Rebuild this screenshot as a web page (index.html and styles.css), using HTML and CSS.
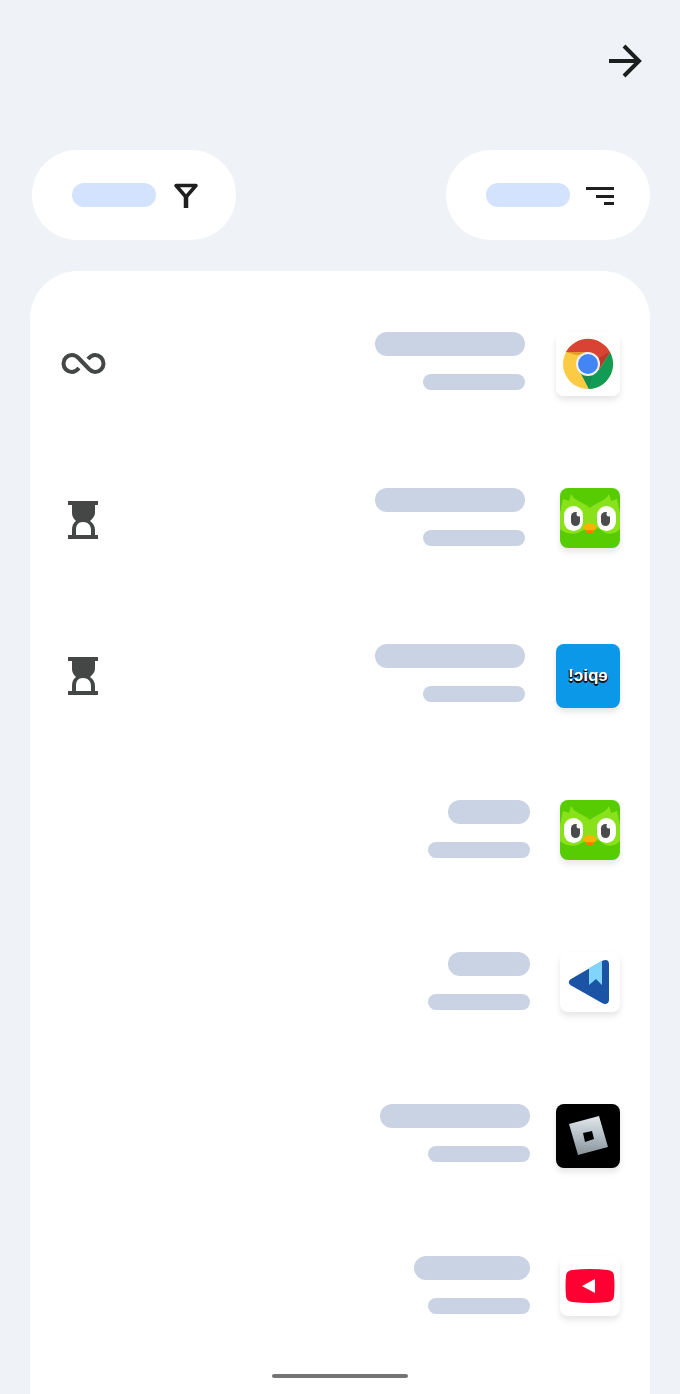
FILE: index.html
```
<!DOCTYPE html>
<html lang="en">
<head>
	<meta charset="UTF-8">
	<meta name="viewport" content="width=device-width, initial-scale=1">
	<title>Apps</title>
	<link rel="stylesheet" href="styles.css">
</head>
<body>
	<!-- shared shapes -->
	<svg class="defs" aria-hidden="true">
		<symbol id="hourglass" viewBox="0 0 30 38">
			<path d="M0 0h30v4h-3v8c0 3-2 5-5 8c3 2 5 5 5 9v5h3v4H0v-4h4v-5c0-4 1-7 4-9c-3-3-4-5-4-8V4H0zM8 34h15v-5c0-5-3-8-8-8s-7 3-7 8z" fill="#444746" fill-rule="evenodd"/>
		</symbol>
		<symbol id="owl" viewBox="0 0 60 60">
			<path d="M0 25L3 11l6 2l2-7c4 8 13 8 19 14c6-6 15-6 19-14l2 7l6-2l3 14v16c-5 6-14 6-19 1c-4-4-14-4-18 0c-6 5-17 5-23-1z" fill="#89e219"/>
			<rect x="4" y="18" width="19" height="25" rx="9.500" fill="#fff"/>
			<rect x="37" y="18" width="19" height="25" rx="9.500" fill="#fff"/>
			<rect x="11" y="24" width="9" height="14" rx="4.500" fill="#4b4b4b"/>
			<rect x="41" y="24" width="9" height="14" rx="4.500" fill="#4b4b4b"/>
			<circle cx="19" cy="26" r="2.500" fill="#fff"/>
			<circle cx="49" cy="26" r="2.500" fill="#fff"/>
			<path d="M26 40h8v3c-1 4-7 4-8 0z" fill="#f47b00"/>
			<path d="M30 35c4 0 8 4 6 6c-2 2-4 1-6 1s-4 1-6-1c-2-2 2-6 6-6z" fill="#ffb100"/>
		</symbol>
	</svg>

	<main class="screen">
		<header class="topbar">
			<button class="back" type="button" aria-label="Back">
				<svg width="34" height="34" viewBox="0 0 34 34" fill="none" stroke="#1b1f1e" stroke-width="4">
					<path d="M1 17h29M16 2l15 15l-15 15"/>
				</svg>
			</button>
		</header>

		<div class="tools">
			<button class="tool" type="button" aria-label="Filter">
				<span class="tool-label"></span>
				<svg width="28" height="28" viewBox="0 0 28 28" fill="none" stroke="#1f1f1f">
					<path d="M4 4.500h20L14 16z" stroke-width="3.500" stroke-linejoin="round"/>
					<path d="M14 15v12" stroke-width="4.500"/>
				</svg>
			</button>
			<button class="tool" type="button" aria-label="Sort">
				<span class="tool-label"></span>
				<svg width="28" height="28" viewBox="0 0 28 28" fill="#1f1f1f">
					<path d="M0 6h28v3H0zM10 14h18v3H10zM18 21h10v3H18z"/>
				</svg>
			</button>
		</div>

		<ul class="apps">
			<li class="app limited">
				<svg class="status" width="46" height="24" viewBox="0 0 46 24" fill="none" stroke="#444746" stroke-width="4">
					<path d="M19 16C16.500 19 14.500 20 12 20A8.500 8.500 0 0 1 12 3C14.500 3 16.500 4 18.500 6L29 17C31 19 32.500 20 35 20A8.500 8.500 0 0 0 35 3C32.500 3 30.500 4 28 7"/>
				</svg>
				<div class="text"><span class="name"></span><span class="detail"></span></div>
				<div class="slot">
					<svg class="tile large" viewBox="0 0 64 64">
						<rect width="64" height="64" fill="#fff"/>
						<circle cx="32" cy="32" r="25" fill="#fbcb43"/>
						<path d="M10 20A25 25 0 0 1 54 20L43 38L32 21z" fill="#d94334"/>
						<path d="M54 20A25 25 0 0 1 33 57L23 37L43 38z" fill="#129b55"/>
						<path d="M10 20h22v2L20 23z" fill="#e79a2c"/>
						<path d="M54 20H32l11 15z" fill="#d94334"/>
						<path d="M54 20L43 26v11z" fill="#b9392b"/>
						<path d="M23 38l10 19l3-13z" fill="#168c50"/>
						<circle cx="32" cy="32" r="12" fill="#f1f1f1"/>
						<circle cx="32" cy="32" r="10" fill="#4286f5"/>
					</svg>
				</div>
			</li>
			<li class="app limited">
				<svg class="status" width="46" height="38"><use href="#hourglass" x="8" width="30" height="38"/></svg>
				<div class="text"><span class="name"></span><span class="detail"></span></div>
				<div class="slot"><svg class="tile green"><use href="#owl"/></svg></div>
			</li>
			<li class="app limited">
				<svg class="status" width="46" height="38"><use href="#hourglass" x="8" width="30" height="38"/></svg>
				<div class="text"><span class="name"></span><span class="detail"></span></div>
				<div class="slot"><div class="tile large epic"><span>epic!</span></div></div>
			</li>
			<li class="app">
				<div class="text"><span class="name short"></span><span class="detail"></span></div>
				<div class="slot"><svg class="tile green"><use href="#owl"/></svg></div>
			</li>
			<li class="app">
				<div class="text"><span class="name short"></span><span class="detail"></span></div>
				<div class="slot">
					<svg class="tile" viewBox="0 0 60 60">
						<path d="M11 27L42 9c4-2 7-1 7 3v36c0 4-4 5-7 3L12 34c-4-2-4-5-1-7z" fill="#1b53a5"/>
						<path d="M29 16L42 9v24l-6-6l-7 6z" fill="#81d5fb"/>
					</svg>
				</div>
			</li>
			<li class="app">
				<div class="text"><span class="name"></span><span class="detail"></span></div>
				<div class="slot">
					<svg class="tile large black" viewBox="0 0 64 64">
						<defs>
							<linearGradient id="metal" x1="0" y1="0" x2="0" y2="1">
								<stop offset="0" stop-color="#e3e8ec"/>
								<stop offset="0.500" stop-color="#b4bfc8"/>
								<stop offset="1" stop-color="#8a9299"/>
							</linearGradient>
						</defs>
						<path d="M43 12l9 31l-30 8l-9-31zM27 29l2 9l9-3l-2-8z" fill="url(#metal)" fill-rule="evenodd"/>
					</svg>
				</div>
			</li>
			<li class="app">
				<div class="text"><span class="name medium"></span><span class="detail"></span></div>
				<div class="slot">
					<svg class="tile" viewBox="0 0 60 60">
						<path d="M12 14q18-2 36 0q6 1 6 6q1 10 0 20q0 5-6 6q-18 2-36 0q-6-1-6-6q-1-10 0-20q0-5 6-6z" fill="#ff0033"/>
						<path d="M35 23v14l-13-7z" fill="#fff"/>
					</svg>
				</div>
			</li>
		</ul>
	</main>
	<div class="home-bar"></div>
</body>
</html>
```

FILE: styles.css
```
*{
	box-sizing: border-box;
	margin: 0;
	padding: 0;
}
body{
	background-color: #eff3f8;
	font-family: "Liberation Sans", Arial, sans-serif;
}
svg{
	display: block;
	flex: none;
}
button{
	border: none;
	background: none;
	cursor: pointer;
}
.defs{
	position: absolute;
	width: 0;
	height: 0;
}
.screen{
	display: flex;
	flex-direction: column;
	min-height: 100vh;
	padding: 0 30px;
}
.topbar{
	display: flex;
	justify-content: flex-end;
	padding: 44px 8px 72px 0;
}
.tools{
	display: flex;
	justify-content: space-between;
	padding-left: 2px;
	margin-bottom: 31px;
}
.tool{
	display: flex;
	align-items: center;
	gap: 16px;
	height: 90px;
	padding: 0 36px 0 40px;
	border-radius: 45px;
	background-color: #fff;
}
.tool-label{
	width: 84px;
	height: 24px;
	border-radius: 12px;
	background-color: #d3e3fd;
}
.apps{
	flex: 1;
	display: flex;
	flex-direction: column;
	gap: 92px;
	padding: 61px 30px 78px;
	border-radius: 48px 48px 0 0;
	background-color: #fff;
	list-style: none;
}
.app{
	display: flex;
	gap: 30px;
	height: 60px;
}
.app.limited{
	height: 64px;
}
.status{
	align-self: center;
}
.text{
	display: flex;
	flex: 1;
	flex-direction: column;
	align-items: flex-end;
	gap: 18px;
}
.name{
	width: 150px;
	height: 24px;
	border-radius: 12px;
	background-color: #cad3e4;
}
.name.short{
	width: 82px;
}
.name.medium{
	width: 116px;
}
.detail{
	width: 102px;
	height: 16px;
	border-radius: 8px;
	background-color: #cad3e4;
}
.slot{
	display: flex;
	flex: none;
	justify-content: flex-end;
	align-items: flex-start;
	width: 60px;
}
.limited .slot{
	width: 65px;
}
.tile{
	flex: none;
	width: 60px;
	height: 60px;
	border-radius: 8px;
	background-color: #fff;
	box-shadow: 0 4px 6px rgba(0, 0, 0, 0.1);
}
.tile.large{
	width: 64px;
	height: 64px;
}
.tile.green{
	background-color: #58cc02;
}
.tile.black{
	background-color: #000;
}
/* right-to-left layout, the logo is mirrored with it */
.tile.epic{
	display: flex;
	align-items: center;
	justify-content: center;
	background-color: #0c98e9;
	color: #fff;
	font-size: 17px;
	font-weight: bold;
	line-height: 20px;
	text-shadow: -1px 1px 0 #111, 1px 1px 0 #111, 0 2px 0 #111;
	transform: scaleX(-1);
}
.home-bar{
	position: fixed;
	bottom: 16px;
	left: 50%;
	width: 136px;
	height: 4px;
	margin-left: -68px;
	border-radius: 2px;
	background-color: #757575;
}
```
